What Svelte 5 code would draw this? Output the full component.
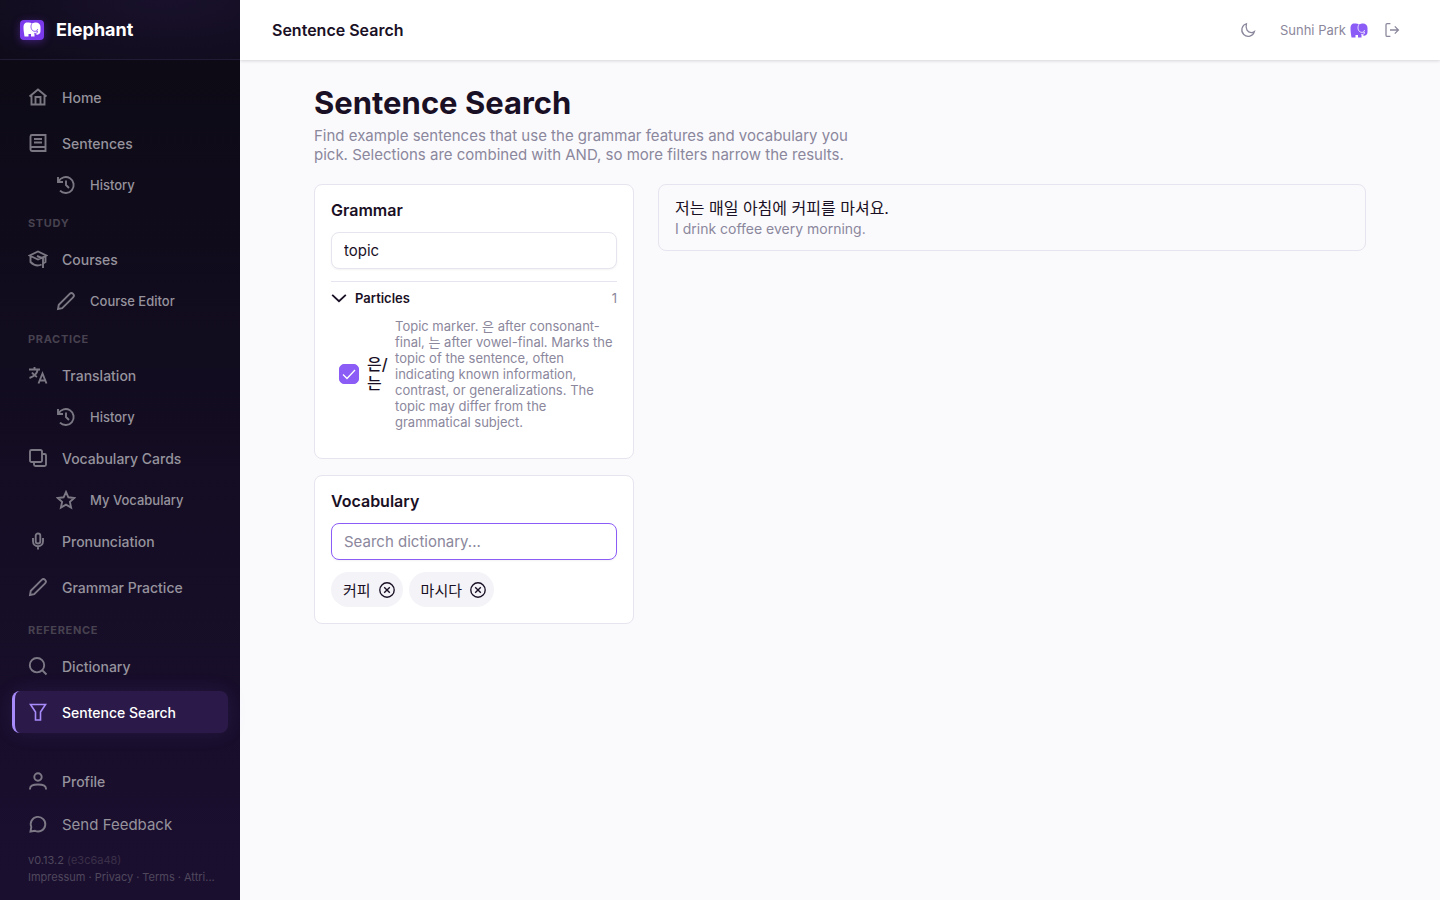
<script>
    const sections = [
        {
            items: [
                {label: 'Home', icon: 'home'},
                {label: 'Sentences', icon: 'book'},
                {label: 'History', icon: 'history', sub: true}
            ]
        },
        {
            title: 'Study',
            items: [
                {label: 'Courses', icon: 'academy'},
                {label: 'Course Editor', icon: 'pencil', sub: true}
            ]
        },
        {
            title: 'Practice',
            items: [
                {label: 'Translation', icon: 'translate'},
                {label: 'History', icon: 'history', sub: true},
                {label: 'Vocabulary Cards', icon: 'cards'},
                {label: 'My Vocabulary', icon: 'star', sub: true},
                {label: 'Pronunciation', icon: 'mic'},
                {label: 'Grammar Practice', icon: 'pencil'}
            ]
        },
        {
            title: 'Reference',
            items: [
                {label: 'Dictionary', icon: 'search'},
                {label: 'Sentence Search', icon: 'funnel', active: true}
            ]
        }
    ];

    const icons = {
        home: 'M1.500 9.500 10 2.500l8.500 7M3.500 8v9.500h13V8M7.500 17.500v-7.500h5v7.500',
        book: 'M4 2h13.500v16H4a1.500 1.500 0 0 1-1.500-1.500v-13A1.500 1.500 0 0 1 4 2zM2.500 15.500a1.500 1.500 0 0 1 1.500-1.500h13.500M6 6h8M6 9.500h8',
        history: 'M2 2v5h5M2.500 6.500A8 8 0 1 1 4 15.700M10 5.500V10l3 3',
        academy: 'M1.500 6.500 10 2.500l8.500 4-8.500 4zM2.500 7.500V13c4 4 8 4 11 2.500M9 7l6 2.500V19M17.500 7v6l-2.500 1.500',
        pencil: 'M2 18l.8-4.200L13.700 2.900a2.200 2.200 0 0 1 3.400 3.400L6.200 17.200z',
        translate: 'M1 4.500h11M6.500 2v2.500M9.800 4.500C9 8.500 6 11.500 1.500 13M4 7.500c1.500 2.200 3 3.500 5 4.500M10.500 18.500l4-10 4 10M12 15.500h5',
        cards: 'M3.500 2h9A1.500 1.500 0 0 1 14 3.500v9a1.500 1.500 0 0 1-1.500 1.500h-9A1.500 1.500 0 0 1 2 12.500v-9A1.500 1.500 0 0 1 3.500 2zM14 6h2.500A1.500 1.500 0 0 1 18 7.500v9a1.500 1.500 0 0 1-1.500 1.500h-9A1.500 1.500 0 0 1 6 16.500V14',
        star: 'M10 2l2.400 5.300 5.800.7-4.300 3.900 1.200 5.700-5.100-2.900-5.100 2.900 1.200-5.700L1.800 8l5.800-.7z',
        mic: 'M10 2.500a2.300 2.300 0 0 1 2.300 2.300v5.400a2.300 2.300 0 0 1-4.600 0V4.800A2.300 2.300 0 0 1 10 2.500zM5 7v3.200a5 5 0 0 0 10 0V7M10 15v3.500',
        search: 'M9 2a7.200 7.200 0 1 1 0 14.400A7.200 7.200 0 0 1 9 2zM14 14l4.500 4.500',
        funnel: 'M2.500 2.500h15L12.500 10v8h-5v-8z',
        profile: 'M10 2.300a3.700 3.700 0 1 1 0 7.400 3.700 3.700 0 0 1 0-7.400zM2 18.500v-.8c0-2.500 2.500-4.200 8-4.200s8 1.700 8 4.200v.8',
        chat: 'M2.500 17.500l.8-4.500A7.300 7.300 0 1 1 7 16.800z',
        moon: 'M8 2.200A8 8 0 1 0 18 12a7 7 0 0 1-4 1.200C9.500 13 6.500 9 8 2.200z',
        logout: 'M8 2H4A1.500 1.500 0 0 0 2.500 3.500v13A1.500 1.500 0 0 0 4 18h4M7.500 10H18M13.500 5.500 18 10l-4.500 4.500',
        chevron: 'M1.500 6 10 14l8.500-8',
        clear: 'M10 1a9 9 0 1 1 0 18 9 9 0 0 1 0-18zM6.500 6.500l7 7M13.500 6.500l-7 7'
    };

    const footerLinks = ['Impressum', 'Privacy', 'Terms', 'Attri...'];

    let grammar = $state('topic');
    let query = $state('');
    let open = $state(true);
    let checked = $state(true);
    let words = $state(['커피', '마시다']);

    function removeWord(word) {
        words = words.filter(w => w !== word);
    }
</script>

{#snippet icon(name)}
    <svg class="icon {name}" viewBox="0 0 20 20" aria-hidden="true"><path d={icons[name]}/></svg>
{/snippet}

{#snippet elephant()}
    <svg class="elephant" viewBox="0 0 36 30" aria-hidden="true">
        <path class="body" d="M9 1C3 1 1 5 1 11c0 7 1 10 2 18h8v-5h5v5h7v-7h1c1 3 4 4 6 3 4-1 5-4 5-8v-7c0-6-4-9-9-9-3 0-5 1-7 1-3 0-6-1-10-1z"/>
        <path class="ear" d="M19 1c-4 5-4 12 0 16 4 3 10 2 10-3M23 22.500c3 1 6 0 6-4h-2"/>
    </svg>
{/snippet}

{#snippet link(item)}
    <a href="#{item.icon}" class:sub={item.sub} class:active={item.active} aria-current={item.active ? 'page' : undefined}>
        {@render icon(item.icon)}
        <span>{item.label}</span>
    </a>
{/snippet}

<div class="app">
    <aside>
        <div class="brand">
            <span class="logo">{@render elephant()}</span>
            Elephant
        </div>
        <nav>
            {#each sections as section}
                {#if section.title}
                    <h2>{section.title}</h2>
                {/if}
                {#each section.items as item}
                    {@render link(item)}
                {/each}
            {/each}
        </nav>
        <div class="bottom">
            {@render link({label: 'Profile', icon: 'profile'})}
            <button class="feedback">{@render icon('chat')}Send Feedback</button>
            <div class="version">v0.13.2 <span>(e3c6a48)</span></div>
            <div class="legal">
                {#each footerLinks as name, i}{#if i > 0}<span>·</span>{/if}<a href="#{name}">{name}</a>{/each}
            </div>
        </div>
    </aside>

    <div class="page">
        <header>
            <div class="title">Sentence Search</div>
            <button class="tool" aria-label="Dark mode">{@render icon('moon')}</button>
            <div class="user">Sunhi Park {@render elephant()}</div>
            <button class="tool" aria-label="Log out">{@render icon('logout')}</button>
        </header>

        <main>
            <h1>Sentence Search</h1>
            <p class="intro">Find example sentences that use the grammar features and vocabulary you pick. Selections are combined with AND, so more filters narrow the results.</p>

            <div class="columns">
                <div class="filters">
                    <section class="card">
                        <h3><label for="grammar">Grammar</label></h3>
                        <input id="grammar" type="text" bind:value={grammar}>
                        <button class="group" aria-expanded={open} onclick={() => open = !open}>
                            {@render icon('chevron')}
                            <span>Particles</span>
                            <small>1</small>
                        </button>
                        {#if open}
                            <label class="feature">
                                <input type="checkbox" bind:checked>
                                <span class="marker" lang="ko">은/는</span>
                                <span class="about">Topic marker. 은 after consonant-final, 는 after vowel-final. Marks the topic of the sentence, often indicating known information, contrast, or generalizations. The topic may differ from the grammatical subject.</span>
                            </label>
                        {/if}
                    </section>

                    <section class="card">
                        <h3><label for="vocabulary">Vocabulary</label></h3>
                        <input id="vocabulary" class="current" type="text" placeholder="Search dictionary..." bind:value={query}>
                        <div class="chips">
                            {#each words as word}
                                <span class="chip" lang="ko">
                                    {word}
                                    <button aria-label="Remove {word}" onclick={() => removeWord(word)}>{@render icon('clear')}</button>
                                </span>
                            {/each}
                        </div>
                    </section>
                </div>

                <article>
                    <div class="korean" lang="ko">저는 매일 아침에 커피를 마셔요.</div>
                    <div class="english">I drink coffee every morning.</div>
                </article>
            </div>
        </main>
    </div>
</div>

<style>
    :global(body) {
        margin: 0;
        background: #fafafc;
    }

    .app {
        display: flex;
        min-height: 100vh;
        font-family: Inter, "Noto Sans CJK KR", sans-serif;
        font-size: 16px;
        color: #1a1025;
    }

    .app * {
        box-sizing: border-box;
    }

    a {
        color: inherit;
        text-decoration: none;
    }

    button {
        font-family: inherit;
        color: inherit;
        background: none;
        border: none;
        padding: 0;
        cursor: pointer;
    }

    .icon {
        width: 20px;
        height: 20px;
        flex: none;
        fill: none;
        stroke: currentColor;
        stroke-width: 1.9;
    }

    .elephant {
        width: 18px;
        height: 15px;
    }

    .body {
        fill: #8b5cf6;
    }

    .ear {
        fill: none;
        stroke: #fff;
        stroke-width: 1.7;
    }

    aside {
        width: 240px;
        height: 100vh;
        flex: none;
        position: sticky;
        top: 0;
        display: flex;
        flex-direction: column;
        background: linear-gradient(180deg, #0c0a14 0%, #1b0f30 100%);
        color: #96939d;
    }

    .brand {
        display: flex;
        align-items: center;
        gap: 12px;
        height: 60px;
        flex: none;
        padding: 0 20px;
        border-bottom: 1px solid #231b35;
        background: radial-gradient(ellipse at 70% 0, #19112c, #0f0b1a);
        color: #fff;
        font-size: 18px;
        font-weight: 700;
    }

    .logo {
        display: flex;
        align-items: center;
        justify-content: center;
        width: 24px;
        height: 20px;
        border-radius: 4px;
        background: #7c3aed;
        box-shadow: 0 2px 8px rgba(124, 58, 237, 0.4);
    }

    .logo .body {
        fill: #fff;
    }

    .logo .ear {
        stroke: #7c3aed;
    }

    nav {
        flex: 1;
        display: flex;
        flex-direction: column;
        padding: 14px 12px 0;
    }

    nav h2 {
        margin: 0;
        padding: 13px 16px 6px;
        font-size: 11px;
        line-height: 14px;
        font-weight: 700;
        letter-spacing: 0.06em;
        text-transform: uppercase;
        color: #47424f;
    }

    nav a,
    .bottom > a,
    .feedback {
        display: flex;
        align-items: center;
        gap: 14px;
        height: 42px;
        margin: 2px 0;
        padding: 0 13px;
        border-left: 3px solid transparent;
        border-radius: 8px;
        font-size: 14px;
        font-weight: 500;
    }

    nav a.sub {
        height: 33px;
        margin-left: 28px;
        font-size: 13px;
    }

    nav a .icon,
    .bottom .icon {
        opacity: 0.8;
    }

    nav a.active {
        color: #fff;
        background: #2b1a49;
        border-left-color: #a78bfa;
        box-shadow: 0 0 20px rgba(139, 92, 246, 0.12);
    }

    nav a.active .icon {
        color: #a78bfa;
        stroke-width: 1.6;
        opacity: 1;
    }

    .bottom {
        padding: 0 12px 14px;
        font-size: 11px;
        line-height: 17px;
        color: #4f485d;
    }

    .bottom > a,
    .feedback {
        color: #96939d;
    }

    .feedback {
        width: 100%;
        height: 40px;
        font-size: 15px;
        font-weight: 400;
    }

    .version,
    .legal {
        margin: 0 16px;
    }

    .version {
        margin-top: 8px;
    }

    .version span {
        color: #3a3049;
    }

    .legal {
        white-space: nowrap;
    }

    .legal span {
        margin: 0 3px;
    }

    .page {
        flex: 1;
        min-width: 0;
    }

    header {
        display: flex;
        align-items: center;
        height: 60px;
        padding: 0 40px 0 32px;
        background: #fff;
        box-shadow: 0 1px 3px rgba(26, 16, 37, 0.16);
        color: #8b879c;
        font-size: 13px;
    }

    .title {
        flex: 1;
        color: #1a1025;
        font-size: 16px;
        font-weight: 600;
    }

    .tool {
        display: flex;
    }

    .tool .icon {
        width: 16px;
        height: 16px;
        stroke-width: 1.6;
    }

    .user {
        display: flex;
        align-items: center;
        gap: 4px;
        margin: 0 16px 0 24px;
    }

    main {
        max-width: 1100px;
        margin: 0 auto;
        padding: 24px;
    }

    h1 {
        margin: 0;
        font-size: 31px;
        line-height: 38px;
        font-weight: 700;
    }

    .intro {
        max-width: 560px;
        margin: 4px 0 20px;
        font-size: 15px;
        line-height: 19px;
        color: #8b879c;
    }

    .columns {
        display: grid;
        grid-template-columns: 320px minmax(0, 1fr);
        gap: 24px;
        align-items: start;
    }

    .filters {
        display: grid;
        gap: 16px;
    }

    .card,
    article {
        border: 1px solid #e6e4ee;
        border-radius: 8px;
        padding: 16px;
    }

    .card {
        background: #fff;
    }

    h3 {
        margin: 0 0 12px;
        font-size: 16px;
        line-height: 19px;
        font-weight: 600;
    }

    input[type="text"] {
        display: block;
        width: 100%;
        height: 37px;
        padding: 0 12px;
        border: 1px solid #e6e4ee;
        border-radius: 8px;
        outline: none;
        background: #fff;
        box-shadow: 0 1px 2px rgba(26, 16, 37, 0.05);
        color: #1a1025;
        font-family: inherit;
        font-size: 15px;
    }

    input[type="text"].current {
        border-color: #8b5cf6;
    }

    input::placeholder {
        color: #8b879c;
    }

    .group {
        display: flex;
        align-items: center;
        gap: 8px;
        width: 100%;
        height: 33px;
        margin-top: 12px;
        border-top: 1px solid #e6e4ee;
        font-size: 13px;
        font-weight: 600;
        text-align: left;
    }

    .group .icon {
        width: 16px;
        height: 16px;
        stroke-width: 2.3;
    }

    .group span {
        flex: 1;
    }

    .group small {
        color: #8b879c;
        font-size: 13px;
        font-weight: 400;
    }

    .feature {
        display: flex;
        align-items: center;
        gap: 8px;
        padding: 4px 0 12px 8px;
    }

    .feature input {
        appearance: none;
        width: 20px;
        height: 20px;
        flex: none;
        margin: 0;
        border: 1px solid #d8d5e2;
        border-radius: 5px;
    }

    .feature input:checked {
        border-color: #8b5cf6;
        background: #8b5cf6 url("data:image/svg+xml,%3Csvg xmlns='http://www.w3.org/2000/svg' viewBox='0 0 18 18'%3E%3Cpath d='M3 9.500l4 4L15 5' fill='none' stroke='white' stroke-width='1.300'/%3E%3C/svg%3E") center / 18px no-repeat;
    }

    .marker {
        width: 20px;
        flex: none;
        line-height: 19px;
        font-weight: 500;
    }

    .about {
        color: #8b879c;
        font-size: 13px;
        line-height: 16px;
    }

    .chips {
        display: flex;
        flex-wrap: wrap;
        gap: 6px;
        margin-top: 12px;
    }

    .chip {
        display: flex;
        align-items: center;
        gap: 8px;
        height: 35px;
        padding: 0 8px 0 12px;
        border-radius: 18px;
        background: #f4f3f8;
        font-size: 15px;
    }

    .chip button {
        display: flex;
    }

    .chip .icon {
        width: 16px;
        height: 16px;
        stroke-width: 1.7;
    }

    article {
        padding: 12px 16px 11px;
    }

    .korean {
        line-height: 22px;
    }

    .english {
        color: #8b879c;
        font-size: 14px;
        line-height: 20px;
    }
</style>
